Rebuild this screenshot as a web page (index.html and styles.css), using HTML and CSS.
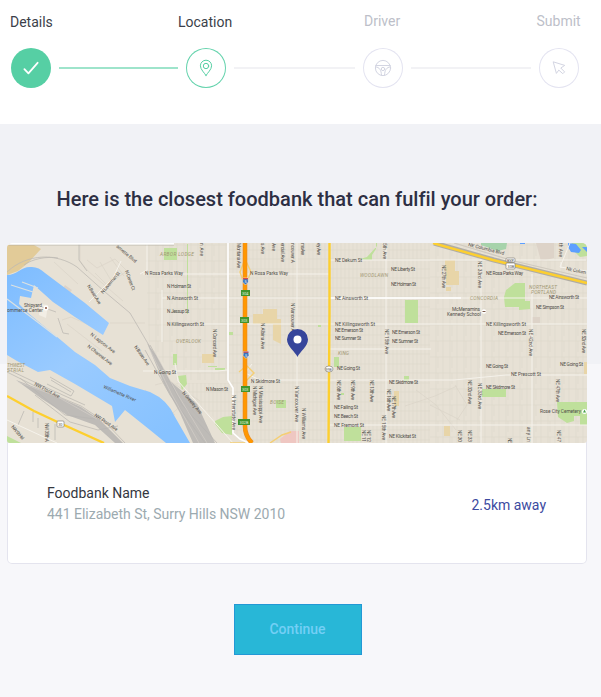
FILE: index.html
```
<!DOCTYPE html>
<html lang="en">
<head>
<meta charset="utf-8">
<title>Closest foodbank</title>
<link rel="stylesheet" href="styles.css">
</head>
<body>
<header class="progress">
  <div class="labels">
    <span>Details</span><span>Location</span><span class="muted">Driver</span><span class="muted">Submit</span>
  </div>
  <div class="track">
    <div class="step done"><svg width="40" height="40" viewBox="0 0 40 40"><path d="M13.4 21.2l4 4.1 9.2-10.5" stroke-width="1.8"/></svg></div>
    <i class="line active"></i>
    <div class="step current"><svg width="40" height="40" viewBox="0 0 40 40"><path d="M20 27.500c-1.300-2.500-5.600-5.900-5.600-9.700a5.600 5.600 0 0 1 11.200 0c0 3.800-4.300 7.200-5.600 9.700z"/><circle cx="20" cy="18" r="2.700"/></svg></div>
    <i class="line"></i>
    <div class="step"><svg width="40" height="40" viewBox="0 0 40 40"><circle cx="20" cy="20" r="7.600"/><path d="M12.800 17.500h14.400M12.800 19c3.500 0 5.500 3 5.700 8.200M27.200 19c-3.500 0-5.500 3-5.700 8.200"/><circle cx="20" cy="21" r="1.700"/></svg></div>
    <i class="line"></i>
    <div class="step"><svg width="40" height="40" viewBox="0 0 40 40"><path d="M14.300 14.200l3.100 11.200 2.400-3.300 4 3.600 1.800-1.800-3.800-3.900 3.600-2.400z"/></svg></div>
  </div>
</header>
<main>
  <h1>Here is the closest foodbank that can fulfil your order:</h1>
  <section class="card">
    <svg class="map" viewBox="7 243 580 200">
      <defs>
        <linearGradient id="water" x1="0" y1="0" x2=".8" y2="1"><stop stop-color="#7dbcff"/><stop offset=".5" stop-color="#9acbff"/><stop offset="1" stop-color="#87c2ff"/></linearGradient>
        <pattern id="blocks" width="8" height="19" patternUnits="userSpaceOnUse"><path d="M1 0v19M5 0v19M0 3h8M0 12h8"/></pattern>
        <pattern id="wide" width="14" height="16" patternUnits="userSpaceOnUse"><path d="M2 0v16M9 0v16M0 5h14M4 5v11"/></pattern>
      </defs>
      <path fill="#e7e1d5" d="M7 243h580v200H7z"/>
      <path fill="url(#wide)" class="grid" d="M145 243h82v137h-50l-28-35zM430 243h157v200H430z"/>
      <path fill="url(#blocks)" class="grid" d="M229 243h201v200H250l-30-20-45-40h54z"/>
      <path class="minor" d="M87 260l10 8 18-9 12 12-20 14-12-12M110 257l14 19M100 262l12 20M54 262l24 22M110 323h35M80 243v18l8 10 35 30M62 320l9-3 18 8M67 324l35 27M165 420l20-18 22 25M155 385l15-4 30 20M405 406l30-10 22-10M430 405l30 15M416 390l20 15 20 25M455 385l12 20-10 15M145 390l30 25"/>
      <g fill="#bfe09b">
        <path d="M164 248h13v12h-13zM377 243v3l-10 11-7 2 5 1h7v-5l4-6v-6zM405 300h13v23h-13zM515 283h10v18h5v8l-11 1v-3h-14l-1-10 2-7zM572 243h15v13l-7 1-8-8zM557 402h30v23h-7v-9h-6v5l-7 2-9-6zM482 389h24v8h-24zM344 427h17v14h-17zM334 357h5v10h-5zM404 376h5v5h-5zM276 400h10v8h-10zM173 354h4v11h-4zM178 376l8-1 1 9-5 6zM215 421l8-4 9-1v19l-10-2-7-9zM229 332h4v3h-4zM187 244h1v70h-1zM208 366h9v1h-9zM215 368h10v2h-10zM318 325h3v2h-3zM341 393h3v2h-3zM7 436l14 7H7z"/>
      </g>
      <path fill="#a7d3ab" d="M481 243h26l-1 6-8 2-17-6z"/>
      <path fill="#5d9fff" d="M568 243l8 1 5 6-2 3-8-1-3-5zM582 247h5v5zM520 243h5v1h-5z"/>
      <g fill="#e8d5a8"><path fill="#e2cb98" d="M7 245h27l7 4-13 14-10 8-11 4z"/><path d="M253 314h10v-5h14v10h4v25l-8-4v-16h-20zM202 354h12v9h-12zM445 260h10v11h-10zM446 271h13v14h-13zM446 287h5v4h-5zM394 391h5v15h-5zM444 426h6v10h-6zM584 362h3v12h-3z"/></g>
      <path fill="#efc7c2" d="M280 439l10-8h9v12h-18z"/>
      <path fill="#ddd3c8" d="M536 243h18v15l-13 3zM532 317h8v6h-8zM65 285l7 5-3 4-7-4z"/>
      <path fill="url(#water)" d="M7 275C17 275 21 267 30 267Q38 266 45 273L65 288 85 303 109 323 103 335 75 317 53 302 34 285 31 298 20 296 19 304 28 313 45 327 62 341 75 352 95 365 110 378 130 386 150 392Q168 400 175 417L190 443H166L150 430 125 410 115 422 112 406 75 384 50 370 38 372 17 361 7 355z"/>
      <path class="pier" d="M11 285l22 7M22 282l16 6M7 299l24 18 26 20"/>
      <path d="M40 304l8 1-2 13-7-3z" fill="#f2eee5"/>
      <g class="rail"><path d="M7 272c20-19 50-19 70-5l28 25 25 21 20 34M24 265c8-6 23-9 34-7M79 243v17l8 11M7 372l40 20 34 14 24 16 20 21M7 369l38 18 40 18M50 377l24 14-3 5-24-12M51 380l20 12M35 395l35 27 28 8 20-4M20 378l45 37 30 4M24 411l-6 14M33 412v10M38 418v10M55 424v16M150 345l14 25 18 35 35 38M145 350l25 45 35 48M58 318l5 15 6 1M42 307l14 5"/></g>
      <path fill="#b6b4b2" opacity=".85" d="M16 380l31 12 34 15 19 13 23 23h-8l-20-18-28-10-25-16zM147 343l9 12 14 26 27 23 18 39h-22l-13-30-16-29z"/>
      <path stroke="#d6d2cb" stroke-width=".6" fill="none" d="M18 382l38 14 41 23M150 350l22 45 27 48M154 351l24 44 29 48"/>
      <g class="road">
        <path d="M143 274h186M162 298h425M183 324h404M143 371h75l9-1M252 380h202l52-5h81M330 349h101M330 425h257M330 260h256M386 243v200M481 258v185M532 274v169M561 262v6M147 243v27l-7 4M297 243v200M162 290v52M7 420l50 23M89 302l24-24 8-17M175 363l3 18 55 62M260 380l-15-7 7-9M570 243l-10 24 27 4"/>
        <path d="M228 243v137l5 8v45l7 6 9 4M329 298h132"/>
      </g>
      <path d="M434 243l60 17 93 23" fill="none" stroke="#b1ada4" stroke-width="5"/>
      <path class="casing" d="M454 243l60 18 73 17"/>
      <path class="yellow" d="M433 243l60 17 94 23M7 396l27 15 30 14 40 18M329.500 243v70l-1 130"/>
      <path d="M245 259l-5 13 4 12M245 259l6 13-5 12M245 367l-6 5M245 382l9-9-9-9M230 443h15M270 443l12-8 9-3" fill="none" stroke="#f5ce73" stroke-width="1.400"/>
      <path d="M245 243v183q0 10 7 17" fill="none" stroke="#e98b20" stroke-width="4.600"/><path d="M245 243v183q0 10 7 17" fill="none" stroke="#ff9700" stroke-width="3.200"/>
      <path fill="#fff" d="M7 243h167v1.700H7z"/><path fill="#aaa69e" opacity=".6" d="M9 244.700h165v.8H9z"/>
      <g class="lbl">
        <text x="145" y="275" textLength="38">N Rosa Parks Way</text><text x="250" y="275" textLength="38">N Rosa Parks Way</text>
        <text x="167" y="288" textLength="24">N Holman St</text><text x="167" y="300" textLength="31">N Ainsworth St</text><text x="167" y="313" textLength="22">N Jessup St</text><text x="167" y="326" textLength="37">N Killingsworth St</text>
        <text x="154" y="374" textLength="22">N Going St</text><text x="251" y="383" textLength="29">N Skidmore St</text><text x="206" y="391" textLength="22">N Mason St</text>
        <text x="335" y="262" textLength="27">NE Dekum St</text><text x="391" y="271" textLength="24">NE Liberty St</text><text x="391" y="286" textLength="25">NE Holman St</text><text x="335" y="300" textLength="33">NE Ainsworth St</text><text x="335" y="326" textLength="40">NE Killingsworth St</text><text x="335" y="332" textLength="28">NE Emerson St</text><text x="335" y="340" textLength="26">NE Sumner St</text><text x="392" y="334" textLength="28">NE Emerson St</text><text x="392" y="343" textLength="26">NE Sumner St</text>
        <text x="337" y="370" textLength="23">NE Going St</text><text x="389" y="384" textLength="29">NE Skidmore St</text><text x="334" y="409" textLength="24">NE Failing St</text><text x="334" y="418" textLength="24">NE Beech St</text><text x="334" y="427" textLength="30">NE Fremont St</text><text x="389" y="438" textLength="27">NE Klickitat St</text>
        <text x="486" y="275" textLength="37">NE Rosa Parks Way</text><text x="549" y="299" textLength="30">NE Ainsworth St</text><text x="536" y="309" textLength="28">NE Simpson St</text><text x="486" y="326" textLength="40">NE Killingsworth St</text><text x="498" y="335" textLength="28">NE Emerson St</text><text x="486" y="368" textLength="22">NE Going St</text><text x="560" y="366" textLength="23">NE Going St</text><text x="511" y="376" textLength="30">NE Prescott St</text><text x="486" y="389" textLength="29">NE Skidmore St</text>
        <text x="452" y="311" textLength="28">McMenamins</text><text x="447" y="316" textLength="34">Kennedy School</text><text x="540" y="413" textLength="41">Rose City Cemetery</text>
        <text x="24" y="307" textLength="18">Shipyard</text><text x="7" y="312" textLength="36">ommerce Center</text>
        <text transform="translate(468 246) rotate(14)" textLength="37">NE Columbia Blvd</text><text transform="translate(566 270) rotate(12)" textLength="20">NE Colum</text>
        <text transform="translate(116 247) rotate(40)" textLength="25">amette Blvd</text><text transform="translate(103 294) rotate(-50)" textLength="27">N Leverman St</text><text transform="translate(125 271) rotate(70)" textLength="21">N Center Ct</text><text transform="translate(87 286) rotate(58)" textLength="22">N Basin Ave</text><text transform="translate(90 335) rotate(38)" textLength="30">N Lagoon Ave</text><text transform="translate(87 347) rotate(38)" textLength="30">N Channel Ave</text><text transform="translate(134 347) rotate(55)" textLength="23">N Basin Ave</text><text transform="translate(103 388) rotate(23)" textLength="35">Willamette River</text><text transform="translate(34 385) rotate(28)" textLength="28">NW Front Ave</text><text transform="translate(94 416) rotate(34)" textLength="27">NW Front Ave</text><text transform="translate(11 427) rotate(50)" textLength="17">NW St Hel</text><text transform="translate(182 393) rotate(50)" textLength="28">N Greeley Ave</text>
        <text transform="translate(45 423) rotate(90)" textLength="19">NW 35th A</text><text transform="translate(213 329) rotate(90)" textLength="28">N Concord Ave</text><text transform="translate(237 243) rotate(90)" textLength="25">Montana Ave</text><text transform="translate(232 395) rotate(90)" textLength="35">N Interstate Ave</text><text transform="translate(253 386) rotate(90)" textLength="29">N Michigan Ave</text><text transform="translate(259 386) rotate(90)" textLength="37">N Mississippi Ave</text><text transform="translate(261 323) rotate(90)" textLength="26">N Albina Ave</text><text transform="translate(291 303) rotate(90)" textLength="33">N Vancouver Ave</text><text transform="translate(295 386) rotate(90)" textLength="36">N Vancouver Ave</text><text transform="translate(302 408) rotate(90)" textLength="31">N Williams Ave</text>
        <text transform="translate(200 243) rotate(90)" textLength="13">n Ave</text><text transform="translate(261 243) rotate(90)" textLength="11">s Ave</text><text transform="translate(272 243) rotate(90)" textLength="8">Ave</text><text transform="translate(281 243) rotate(90)" textLength="19">ercial Ave</text><text transform="translate(291 243) rotate(90)" textLength="20">ncouver A</text><text transform="translate(301 243) rotate(90)" textLength="12">ms Ave</text><text transform="translate(317 243) rotate(90)" textLength="12">ey Ave</text><text transform="translate(383 243) rotate(90)" textLength="16">5th Ave</text><text transform="translate(442 265) rotate(90)" textLength="23">NE 27th Ave</text><text transform="translate(478 261) rotate(90)" textLength="27">NE 33rd Ave</text><text transform="translate(385 329) rotate(90)" textLength="25">NE 15th Ave</text>
        <text transform="translate(337 380) rotate(90)" textLength="20">NE 6th Ave</text><text transform="translate(351 380) rotate(90)" textLength="20">NE 9th Ave</text><text transform="translate(370 380) rotate(90)" textLength="22">NE 13th Ave</text><text transform="translate(387 389) rotate(90)" textLength="22">NE 16th Ave</text><text transform="translate(392 396) rotate(90)" textLength="22">NE 17th Ave</text><text transform="translate(382 415) rotate(90)" textLength="25">NE 15th Ave</text><text transform="translate(468 380) rotate(90)" textLength="24">NE 32nd Ave</text><text transform="translate(478 383) rotate(90)" textLength="26">NE 33rd Ave</text><text transform="translate(556 379) rotate(90)" textLength="23">NE 47th Ave</text><text transform="translate(529 329) rotate(90)" textLength="27">NE 42nd Ave</text><text transform="translate(582 329) rotate(90)" textLength="24">NE 52nd Ave</text>
        <text transform="translate(362 430) rotate(90)" textLength="12">NE 11</text><text transform="translate(367 430) rotate(90)" textLength="12">NE 12</text><text transform="translate(458 430) rotate(90)" textLength="12">NE 30</text><text transform="translate(468 430) rotate(90)" textLength="12">NE 33</text><text transform="translate(508 438) rotate(90)" textLength="5">NE</text><text transform="translate(527 427) rotate(90)" textLength="15">any Ln</text><text transform="translate(557 430) rotate(90)" textLength="12">NE 47</text><text transform="translate(559 243) rotate(90)" textLength="14">th Ave</text>
      </g>
      <g class="area"><text x="160" y="256" textLength="34">ARBOR LODGE</text><text x="176" y="343" textLength="25">OVERLOOK</text><text x="360" y="277" textLength="28">WOODLAWN</text><text x="470" y="300" textLength="28">CONCORDIA</text><text x="529" y="289" textLength="28">NORTHEAST</text><text x="531" y="294" textLength="25">PORTLAND</text><text x="338" y="355" textLength="11">KING</text><text x="270" y="404" textLength="14">BOISE</text><text x="7" y="367" textLength="18">THWEST</text><text x="7" y="372" textLength="17">STRIAL</text></g>
      <g class="exit"><path d="M241 290h9v6h-9zM240 317h9v6h-9zM241 386h9v6h-9zM238 419h12v6h-12z"/><text x="242" y="294.500">304</text><text x="241" y="321.500">303</text><text x="242" y="390.500">303</text><text x="239.500" y="423.500">302B</text></g>
      <g class="shield"><path fill="#3974bd" stroke="#fff" stroke-width=".5" d="M243 278h5l.500 4-3 3-3-3z"/><path d="M243 278h5v1.200h-5z" fill="#d84c4c"/><path fill="#3974bd" stroke="#fff" stroke-width=".5" d="M243.500 351.500h5l.500 4-3 3-3-3z"/><path d="M243.500 351.500h5v1.200h-5z" fill="#d84c4c"/><text x="244.500" y="283.400" fill="#fff">5</text><text x="245" y="357" fill="#fff">5</text></g>
      <g fill="#fff" stroke="#77736c" stroke-width=".6"><rect x="506" y="258" width="9" height="4" rx="1"/><rect x="506" y="263" width="9" height="6" rx="1"/><rect x="57" y="421" width="7" height="6" rx="1"/><ellipse cx="329" cy="369" rx="4" ry="3"/></g>
      <g class="tiny"><text x="507" y="261.500">BYP</text><text x="507.500" y="267.500">30B</text><text x="58.200" y="425.500">30</text><text x="325.600" y="370.500">99E</text></g>
      <circle cx="46" cy="308" r="2.500" fill="#fff"/><circle cx="46" cy="308" r="1" fill="#84503b"/><circle cx="484" cy="311.500" r="2.200" fill="#fff"/><path d="M482.500 311h3v1h-3z" fill="#7b594a"/><circle cx="584.500" cy="411.500" r="2.500" fill="#fff"/><path d="M584.500 409.500l1.500 3h-3z" fill="#4aa34a"/>
      <path fill="#36459b" fill-rule="evenodd" d="M297.500 357c-2-5-10.500-10.500-10.500-17.500a10.500 10.500 0 0 1 21 0c0 7-8.500 12.500-10.500 17.500z"/><circle cx="297.500" cy="339.500" r="4" fill="#fff"/>
    </svg>
    <div class="info">
      <div><div class="name">Foodbank Name</div><div class="address">441 Elizabeth St, Surry Hills NSW 2010</div></div>
      <div class="distance">2.5km away</div>
    </div>
  </section>
  <button class="continue">Continue</button>
</main>
</body>
</html>
```
FILE: styles.css
```
* { box-sizing: border-box; }
body { margin: 0; background: #f7f7fa; font: 14px/21px Roboto, sans-serif; color: #3c3f4a; }
.progress { height: 124px; background: #fff; padding: 12px 22px 0 10px; }
.labels { display: grid; grid-template-columns: 168px 186px 172.500px 1fr; height: 36px; }
.muted { color: #bdbfc9; margin-top: -1px; }
.track { display: flex; align-items: center; gap: 8px; margin-left: 1px; }
.step { width: 40px; height: 40px; flex: none; border-radius: 50%; color: #d3d5e2; box-shadow: inset 0 0 0 1px #e4e4f1; }
.step svg { display: block; fill: none; stroke: currentColor; stroke-width: 1; stroke-linecap: round; stroke-linejoin: round; }
.step.done { background: #56cfa4; box-shadow: none; color: #fff; }
.step.current { color: #56cfa4; box-shadow: inset 0 0 0 1px #65d3ad; }
.line { flex: none; width: 120px; height: 2px; background: #f2f2f5; }
.step.current + .line { width: 121px; }
.line.active { width: 119px; background: #9ee4cb; }
main { height: 573px; padding: 62px 14px 0 7px; background: linear-gradient(#f1f2f6 240px, #f7f7fa 240px); text-align: center; }
h1 { margin: 0 0 31px; font-size: 20px; line-height: 26px; font-weight: 500; color: #2d2f43; letter-spacing: .01px; }
.card { height: 321px; background: #fff; border-radius: 5px; text-align: left; box-shadow: inset 0 0 0 1px #e4e4ee; overflow: hidden; }
.map { display: block; width: 580px; height: 200px; border-radius: 4px 4px 3px 3px; }
.grid { stroke: none; }
pattern path { stroke: #dcd5c9; stroke-width: .6; fill: none; }
.minor { stroke: #d8d1c6; stroke-width: .6; fill: none; }
.rail path { fill: none; stroke: #bebab4; stroke-width: .8; }
.pier { fill: none; stroke: #dce1e1; stroke-width: 1.2; }
.road path { fill: none; stroke: #f5f2eb; stroke-width: 1; }
.road path + path { stroke: #fff; stroke-width: 1.6; }
.casing { fill: none; stroke: #d0cabf; stroke-width: 1.2; }
.yellow { fill: none; stroke: #fdcf2f; stroke-width: 2.4; }
.lbl { font-size: 4.8px; fill: #514e49; }
.area { font-size: 4.8px; font-style: italic; fill: #a19773; }
.exit path { fill: #40942f; }
.exit text, .tiny text, .shield text { font-size: 3.8px; }
.exit text { fill: #e6f4de; }
.tiny text { fill: #57544f; }
.info { display: flex; align-items: center; justify-content: space-between; padding: 40px 41px 0 40px; }
.name { color: #35373f; }
.address { color: #9caab0; letter-spacing: -.02px; }
.distance { color: #3c4a9f; margin-top: 3px; }
.continue { display: block; width: 128px; height: 51px; margin: 40px 0 0 227px; padding: 0 1px 0 0; border: 1px solid #2398d5; background: #28b7d7; color: #74cff5; font: 500 14px/21px Roboto, sans-serif; }
```
